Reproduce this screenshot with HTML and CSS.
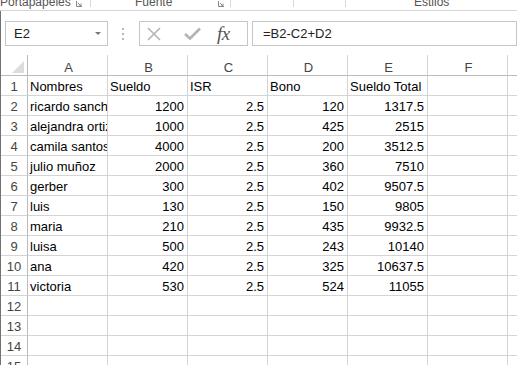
FILE: index.html
```html
<!DOCTYPE html>
<html lang="es">
<head>
  <meta charset="UTF-8">
  <meta name="viewport" content="width=device-width, initial-scale=1.0">
  <title>Libro1 - Excel</title>
  <link rel="stylesheet" href="styles.css">
</head>
<body>

  <!-- CINTA (recortada) -->
  <div class="ribbon">
    <div class="group g-clip">
      <span class="label">Portapapeles</span>
      <svg class="launcher" width="6" height="6" viewBox="0 0 6 6"><path d="M0.5 0V5.5H6" fill="none" stroke="#8a8a8a"/><path d="M2 2L5 5M5 2.5V5H2.5" fill="none" stroke="#8a8a8a"/></svg>
    </div>
    <div class="group g-font">
      <span class="label">Fuente</span>
      <svg class="launcher" width="6" height="6" viewBox="0 0 6 6"><path d="M0.5 0V5.5H6" fill="none" stroke="#8a8a8a"/><path d="M2 2L5 5M5 2.5V5H2.5" fill="none" stroke="#8a8a8a"/></svg>
    </div>
    <div class="group g-align"></div>
    <div class="group g-num"></div>
    <div class="group g-styles"><span class="label">Estilos</span></div>
  </div>

  <div class="workbook">

    <!-- BARRA DE FORMULAS -->
    <div class="formula-bar">
      <div class="name-box"><span>E2</span><span class="caret"></span></div>
      <div class="grip"></div>
      <div class="fx-box">
        <svg class="ico-x" width="14" height="14" viewBox="0 0 14 14"><path d="M1 1L13 13M13 1L1 13" stroke="#b4b4b4" stroke-width="1.6" fill="none"/></svg>
        <svg class="ico-ok" width="17" height="13" viewBox="0 0 17 13"><path d="M1 7L6 11.5L16 1.5" stroke="#b4b4b4" stroke-width="2.6" fill="none"/></svg>
        <span class="fx">fx</span>
      </div>
      <div class="formula">=B2-C2+D2</div>
    </div>

    <!-- HOJA -->
    <div class="sheet">
      <div class="row head">
        <div class="rh corner"><span class="tri"></span></div>
        <div class="c">A</div><div class="c">B</div><div class="c">C</div><div class="c">D</div><div class="c">E</div><div class="c">F</div><div class="c">G</div>
      </div>
      <div class="row">
        <div class="rh">1</div>
        <div class="c">Nombres</div><div class="c">Sueldo</div><div class="c">ISR</div><div class="c">Bono</div><div class="c">Sueldo Total</div><div class="c"></div><div class="c"></div>
      </div>
      <div class="row">
        <div class="rh">2</div>
        <div class="c">ricardo sanchez</div><div class="c n">1200</div><div class="c n">2.5</div><div class="c n">120</div><div class="c n">1317.5</div><div class="c"></div><div class="c"></div>
      </div>
      <div class="row">
        <div class="rh">3</div>
        <div class="c">alejandra ortiz</div><div class="c n">1000</div><div class="c n">2.5</div><div class="c n">425</div><div class="c n">2515</div><div class="c"></div><div class="c"></div>
      </div>
      <div class="row">
        <div class="rh">4</div>
        <div class="c">camila santos</div><div class="c n">4000</div><div class="c n">2.5</div><div class="c n">200</div><div class="c n">3512.5</div><div class="c"></div><div class="c"></div>
      </div>
      <div class="row">
        <div class="rh">5</div>
        <div class="c">julio muñoz</div><div class="c n">2000</div><div class="c n">2.5</div><div class="c n">360</div><div class="c n">7510</div><div class="c"></div><div class="c"></div>
      </div>
      <div class="row">
        <div class="rh">6</div>
        <div class="c">gerber</div><div class="c n">300</div><div class="c n">2.5</div><div class="c n">402</div><div class="c n">9507.5</div><div class="c"></div><div class="c"></div>
      </div>
      <div class="row">
        <div class="rh">7</div>
        <div class="c">luis</div><div class="c n">130</div><div class="c n">2.5</div><div class="c n">150</div><div class="c n">9805</div><div class="c"></div><div class="c"></div>
      </div>
      <div class="row">
        <div class="rh">8</div>
        <div class="c">maria</div><div class="c n">210</div><div class="c n">2.5</div><div class="c n">435</div><div class="c n">9932.5</div><div class="c"></div><div class="c"></div>
      </div>
      <div class="row">
        <div class="rh">9</div>
        <div class="c">luisa</div><div class="c n">500</div><div class="c n">2.5</div><div class="c n">243</div><div class="c n">10140</div><div class="c"></div><div class="c"></div>
      </div>
      <div class="row">
        <div class="rh">10</div>
        <div class="c">ana</div><div class="c n">420</div><div class="c n">2.5</div><div class="c n">325</div><div class="c n">10637.5</div><div class="c"></div><div class="c"></div>
      </div>
      <div class="row">
        <div class="rh">11</div>
        <div class="c">victoria</div><div class="c n">530</div><div class="c n">2.5</div><div class="c n">524</div><div class="c n">11055</div><div class="c"></div><div class="c"></div>
      </div>
      <div class="row">
        <div class="rh">12</div>
        <div class="c"></div><div class="c"></div><div class="c"></div><div class="c"></div><div class="c"></div><div class="c"></div><div class="c"></div>
      </div>
      <div class="row">
        <div class="rh">13</div>
        <div class="c"></div><div class="c"></div><div class="c"></div><div class="c"></div><div class="c"></div><div class="c"></div><div class="c"></div>
      </div>
      <div class="row">
        <div class="rh">14</div>
        <div class="c"></div><div class="c"></div><div class="c"></div><div class="c"></div><div class="c"></div><div class="c"></div><div class="c"></div>
      </div>
      <div class="row">
        <div class="rh">15</div>
        <div class="c"></div><div class="c"></div><div class="c"></div><div class="c"></div><div class="c"></div><div class="c"></div><div class="c"></div>
      </div>
    </div>

  </div>

</body>
</html>
```

FILE: styles.css
```css
/* === GENERAL === */
* { margin: 0; padding: 0; box-sizing: border-box; }
html, body { height: 365px; overflow: hidden; }
body { background: #fff; color: #000; font-family: "Liberation Sans", Arial, sans-serif; font-size: 13px; }

/* === CINTA === */
.ribbon { display: flex; height: 11px; border-bottom: 1px solid #d5d5d5; overflow: hidden; color: #555; font-size: 12px; }
.group { display: flex; height: 7px; border-right: 1px solid #dadada; }
.label { display: block; line-height: 10px; margin-top: -3px; white-space: nowrap; }
.launcher { margin-left: auto; margin-top: 1px; }
.g-clip { width: 91px; padding-right: 8px; }
.g-font { width: 140px; padding-left: 44px; padding-right: 6px; }
.g-align { width: 63px; }
.g-num { width: 52px; }
.g-styles { flex: 1; border-right: none; padding-left: 68px; }

/* === LIBRO === */
.workbook { border-left: 1px solid #727272; height: 354px; overflow: hidden; }

/* === BARRA DE FORMULAS === */
.formula-bar { display: flex; align-items: center; padding-top: 10px; height: 35px; }
.name-box, .fx-box, .formula { height: 25px; border: 1px solid #c6c6c6; display: flex; align-items: center; }
.name-box { width: 103px; margin-left: 4px; padding-left: 8px; padding-right: 6px; color: #222; }
.caret { margin-left: auto; border-left: 3px solid transparent; border-right: 3px solid transparent; border-top: 3px solid #777; }
.grip { width: 2px; height: 12px; margin: 0 15px 0 14px; background: repeating-linear-gradient(#b8b8b8 0 2px, transparent 2px 5px); }
.fx-box { width: 109px; padding-left: 7px; }
.ico-ok { margin-left: 23px; }
.fx { margin-left: 16px; font-family: "Liberation Serif", serif; font-style: italic; font-size: 19px; color: #555; letter-spacing: -0.5px; }
.formula { flex: 1; margin-left: 4px; padding-left: 10px; color: #222; }

/* === HOJA === */
.sheet { margin-top: 9px; }
.row { display: flex; height: 20px; overflow: hidden; }
.rh, .c { height: 20px; border-bottom: 1px solid #d4d4d4; padding-top: 2px; line-height: 17px; white-space: nowrap; overflow: hidden; }
.rh { width: 27px; flex: none; text-align: center; color: #444; border-right: 1px solid #bcbcbc; }
.c { width: 80px; flex: none; padding-left: 2px; border-right: 1px solid #d4d4d4; }
.c.n { text-align: right; padding-right: 3px; }

.row.head { height: 21px; }
.head .rh, .head .c { height: 21px; line-height: 18px; border-bottom-color: #bcbcbc; color: #444; text-align: center; padding-top: 4px; }
.corner { position: relative; }
.tri { position: absolute; right: 3px; bottom: 2px; width: 12px; height: 12px; background: #dcdcdc; clip-path: polygon(100% 0, 100% 100%, 0 100%); }
```
